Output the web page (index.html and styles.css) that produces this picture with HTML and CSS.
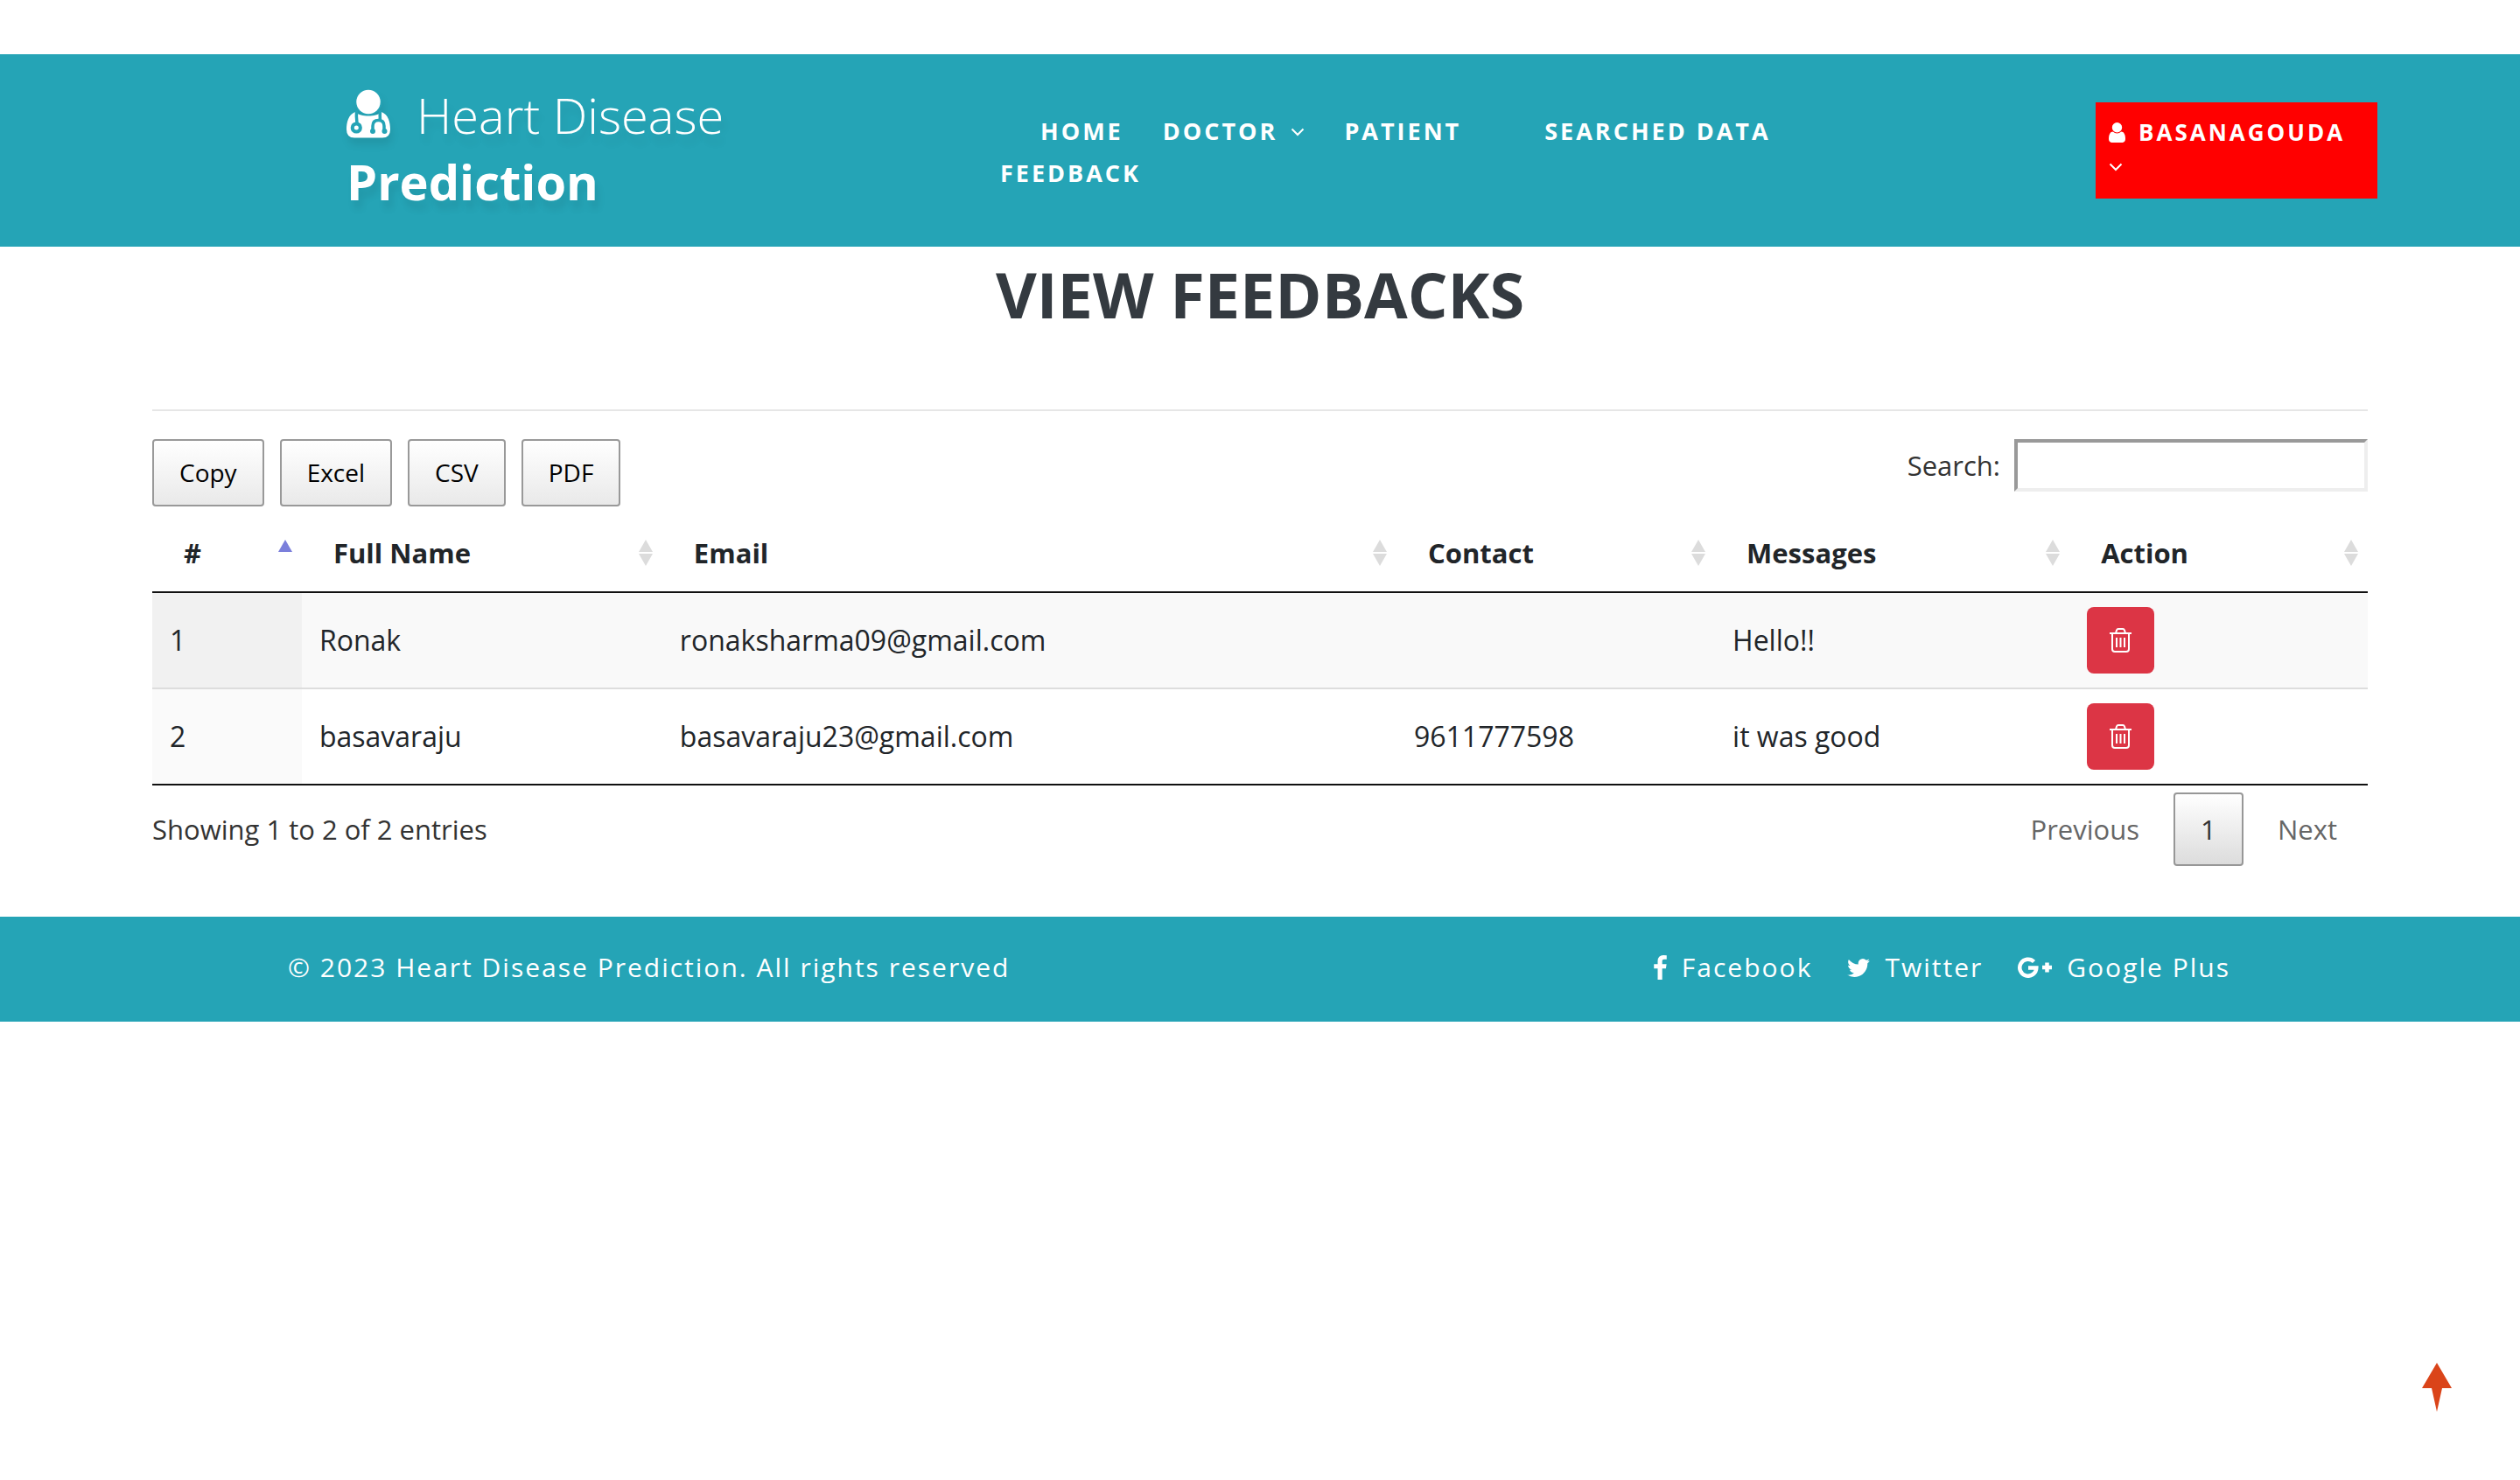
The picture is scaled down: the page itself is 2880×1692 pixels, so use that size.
FILE: index.html
```html
<!DOCTYPE html>
<html lang="en">
<head>
<meta charset="utf-8">
<meta name="viewport" content="width=device-width, initial-scale=1">
<title>Heart Disease Prediction</title>
<link rel="stylesheet" href="styles.css">
</head>
<body>
<svg class="defs" aria-hidden="true">
  <symbol id="chevron" viewBox="0 0 16 10"><path d="M1.500 1.500 8 8l6.500-6.500" fill="none" stroke="currentColor" stroke-width="2"/></symbol>
  <symbol id="trash" viewBox="0 0 25 28"><path d="M0 6h25M7 6l1-3.500Q8.500 1 10 1h5q1.500 0 2 1.500L18 6M3 6v18q0 3 3 3h13q3 0 3-3V6M8 11v11M12.500 11v11M17 11v11" fill="none" stroke="currentColor" stroke-width="2"/></symbol>
  <symbol id="sort" viewBox="0 0 16 30"><path d="M8 0l8 14H0zM0 16h16L8 30z" fill="currentColor"/></symbol>
  <symbol id="sort-up" viewBox="0 0 16 30"><path d="M8 0l8 14H0z" fill="currentColor"/></symbol>
</svg>

<header class="site-header">
  <a class="logo" href="#">
    <span class="logo-top"><svg class="logo-icon" viewBox="0 0 50 56" aria-hidden="true">
      <path fill="#fff" d="M10 26C2 29 0 38 0 46q0 9.500 9 9.500h32q9 0 9-9.500c0-8-2-17-10-20-4 3.500-9 4.500-15 4.500S14 29.500 10 26z"/>
      <circle cx="25" cy="14.500" r="15.500" fill="#25a4b6"/>
      <circle cx="25" cy="14.500" r="13.700" fill="#fff"/>
      <g fill="none" stroke="#25a4b6" stroke-width="3.500">
        <path d="M11.500 24q-.500 7 .500 15"/>
        <path d="M38.500 24q-.500 6 0 12M30 48v-6q0-6.500 6.500-6.500T43 42v6"/>
      </g>
      <g fill="#25a4b6"><circle cx="11.300" cy="44" r="6.600"/><circle cx="30" cy="48" r="3"/><circle cx="43.500" cy="48" r="3"/></g>
      <circle cx="11.300" cy="44" r="2.500" fill="#fff"/>
    </svg>Heart Disease</span>
    <strong class="logo-bottom">Prediction</strong>
  </a>
  <nav>
    <ul class="menu">
      <li class="menu-first"><a href="#">HOME</a></li>
      <li><a href="#">DOCTOR<svg class="chevron" aria-hidden="true"><use href="#chevron"/></svg></a></li>
      <li class="menu-wide"><a href="#">PATIENT</a></li>
      <li><a href="#">SEARCHED DATA</a></li>
      <li><a href="#">FEEDBACK</a></li>
    </ul>
  </nav>
  <a class="account" href="#">
    <span class="account-name"><svg class="user-icon" viewBox="256 128 1280 1536" aria-hidden="true"><path fill="currentColor" d="M1536 1399q0 109-62.500 187t-150.500 78h-854q-88 0-150.500-78t-62.500-187q0-85 8.500-160.500t31.500-152 58.500-131 94-89 134.500-34.500q131 128 313 128t313-128q76 0 134.500 34.500t94 89 58.500 131 31.500 152 8.500 160.500zm-256-887q0 159-112.500 271.500t-271.500 112.500-271.500-112.500-112.500-271.500 112.500-271.500 271.500-112.500 271.500 112.500 112.500 271.500z"/></svg>BASANAGOUDA</span>
    <svg class="account-chevron" aria-hidden="true"><use href="#chevron"/></svg>
  </a>
</header>

<main>
  <h1>VIEW FEEDBACKS</h1>
  <hr>
  <div class="toolbar">
    <div class="exports">
      <button type="button">Copy</button>
      <button type="button">Excel</button>
      <button type="button">CSV</button>
      <button type="button">PDF</button>
    </div>
    <div class="search">
      <label for="search">Search:</label>
      <input id="search" type="search">
    </div>
  </div>
  <table>
    <colgroup><col class="c-num"><col class="c-name"><col class="c-email"><col class="c-contact"><col class="c-msg"><col></colgroup>
    <thead>
      <tr>
        <th scope="col" aria-sort="ascending"><div class="head">#<svg class="sort sorted" aria-hidden="true"><use href="#sort-up"/></svg></div></th>
        <th scope="col"><div class="head">Full Name<svg class="sort" aria-hidden="true"><use href="#sort"/></svg></div></th>
        <th scope="col"><div class="head">Email<svg class="sort" aria-hidden="true"><use href="#sort"/></svg></div></th>
        <th scope="col"><div class="head">Contact<svg class="sort" aria-hidden="true"><use href="#sort"/></svg></div></th>
        <th scope="col"><div class="head">Messages<svg class="sort" aria-hidden="true"><use href="#sort"/></svg></div></th>
        <th scope="col"><div class="head">Action<svg class="sort" aria-hidden="true"><use href="#sort"/></svg></div></th>
      </tr>
    </thead>
    <tbody>
      <tr>
        <td>1</td><td>Ronak</td><td>ronaksharma09@gmail.com</td><td></td><td>Hello!!</td>
        <td><button class="delete" type="button" aria-label="Delete"><svg aria-hidden="true"><use href="#trash"/></svg></button></td>
      </tr>
      <tr>
        <td>2</td><td>basavaraju</td><td>basavaraju23@gmail.com</td><td>9611777598</td><td>it was good</td>
        <td><button class="delete" type="button" aria-label="Delete"><svg aria-hidden="true"><use href="#trash"/></svg></button></td>
      </tr>
    </tbody>
  </table>
  <div class="table-foot">
    <p>Showing 1 to 2 of 2 entries</p>
    <div class="pages">
      <button type="button">Previous</button>
      <button type="button" class="current">1</button>
      <button type="button">Next</button>
    </div>
  </div>
</main>

<footer>
  <p>© 2023 Heart Disease Prediction. All rights reserved</p>
  <ul class="social">
    <li><a href="#"><svg class="i-fb" viewBox="479 0 864 1664" aria-hidden="true"><path fill="currentColor" d="M1343 12v264h-157q-86 0-116 36t-30 108v189h293l-39 296h-254v759h-306v-759h-255v-296h255v-218q0-186 104-288.500t277-102.500q147 0 228 12z"/></svg>Facebook</a></li>
    <li><a href="#"><svg class="i-tw" viewBox="108 256 1576 1280" aria-hidden="true"><path fill="currentColor" d="M1684 408q-67 98-162 167 1 14 1 42 0 130-38 259.500t-115.500 248.500-184.500 210.500-258 146-323 54.500q-271 0-496-145 35 4 78 4 225 0 401-138-105-2-188-64.500t-114-159.500q33 5 61 5 43 0 85-11-112-23-185.500-111.500t-73.500-205.500v-4q68 38 146 41-66-44-105-115t-39-154q0-88 44-163 121 149 294.500 238.500t371.500 99.500q-8-38-8-74 0-134 94.500-228.500t228.500-94.500q140 0 236 102 109-21 205-78-37 115-142 178 93-10 186-50z"/></svg>Twitter</a></li>
    <li><a href="#"><svg class="i-gp" viewBox="0 0 39 24" aria-hidden="true"><path fill="none" stroke="currentColor" stroke-width="4.500" d="M18.500 5.500A9.500 9.500 0 1 0 21.300 12.500H12M28 12h11M33.500 6.500v11"/></svg>Google Plus</a></li>
  </ul>
</footer>

<a class="to-top" href="#" aria-label="Back to top"><svg viewBox="0 0 34 56" aria-hidden="true"><path fill="#da4419" d="M17 0l17 29H23l-6 27-6-27H0z"/></svg></a>
</body>
</html>
```
FILE: styles.css
```css
* { box-sizing: border-box; }

body {
  margin: 0;
  padding-top: 62px;
  background: #fff;
  color: #212529;
  font: 31px/48px "Open Sans", sans-serif;
}

a { color: inherit; text-decoration: none; }
ul { margin: 0; padding: 0; list-style: none; }
p { margin: 0; }
button, input { font: inherit; color: inherit; }
.defs { display: none; }

.site-header {
  display: grid;
  grid-template-columns: 747fr 1000fr 574fr;
  align-items: start;
  padding: 31px 163px 37px 396px;
  background: #25a4b6;
  color: #fff;
}

.logo {
  font-size: 56px;
  line-height: 76px;
  text-shadow: 4px 10px 8px rgba(0, 0, 0, 0.08);
}
.logo-top, .logo-bottom { display: block; }
.logo-top { font-weight: 300; }
.logo-bottom { font-weight: 700; }
.logo-icon {
  width: 50px;
  height: 56px;
  margin-right: 30px;
  vertical-align: -5px;
  filter: drop-shadow(2px 8px 4px rgba(0, 0, 0, 0.08));
}

.menu {
  display: flex;
  flex-wrap: wrap;
  column-gap: 45px;
  padding-top: 33px;
  font-size: 27px;
  font-weight: 700;
  letter-spacing: 3px;
}
.menu-first { margin-left: 46px; }
.menu-wide { margin-right: 50px; }
.chevron { width: 16px; height: 10px; margin-left: 15px; vertical-align: 4px; }

.account {
  justify-self: end;
  width: 322px;
  height: 110px;
  margin-top: 24px;
  padding: 14px 15px;
  background: #f00;
  font-size: 26px;
  font-weight: 700;
  line-height: 40px;
  letter-spacing: 3px;
}
.account-name { display: flex; align-items: center; gap: 15px; }
.user-icon { width: 19px; height: 23px; }
.account-chevron { display: block; width: 16px; height: 10px; margin-top: 15px; }

main { padding: 11px 174px 58px; }

h1 {
  margin: 0 0 89px;
  color: #343a40;
  font-size: 72px;
  line-height: 86px;
  text-align: center;
}

hr { height: 2px; margin: 0; border: 0; background: #e6e6e6; }

.toolbar {
  display: flex;
  justify-content: space-between;
  align-items: flex-start;
  padding: 32px 0 9px;
}
.exports { display: flex; gap: 18px; }
.exports button {
  height: 77px;
  padding: 0 29px 2px;
  border: 2px solid #999;
  border-radius: 4px;
  background: linear-gradient(#fff, #e9e9e9);
  color: #000;
  font-size: 28px;
}
.search { display: flex; align-items: center; gap: 16px; color: #333; }
.search input {
  width: 404px;
  height: 60px;
  padding: 2px 4px;
  border: 4px solid;
  border-color: #999 #eee #eee #999;
  background: #fff;
}

table {
  width: 100%;
  table-layout: fixed;
  border-collapse: separate;
  border-spacing: 0;
  border-bottom: 2px solid #111;
}
.c-num { width: 6.75%; }
.c-name { width: 16.27%; }
.c-email { width: 33.14%; }
.c-contact { width: 14.38%; }
.c-msg { width: 16%; }

th {
  padding: 20px 11px 20px 36px;
  border-bottom: 2px solid #111;
  text-align: left;
}
.head { display: flex; align-items: center; justify-content: space-between; }
.sort { width: 16px; height: 30px; color: #dcdcdc; }
.sorted { color: #7b7fdb; }

td { height: 108px; padding: 16px 20px; font-size: 32px; }
tbody tr:nth-child(odd) td { background: #f9f9f9; }
tbody tr:nth-child(odd) td:first-child { background: #f1f1f1; }
tbody tr:nth-child(even) td:first-child { background: #fafafa; }
tbody tr + tr td { height: 110px; border-top: 2px solid #ddd; }

.delete {
  display: flex;
  align-items: center;
  justify-content: center;
  width: 77px;
  height: 76px;
  padding: 0;
  border: 0;
  border-radius: 8px;
  background: #dc3545;
  color: #fff;
}
.delete svg { width: 25px; height: 28px; }

.table-foot {
  display: flex;
  justify-content: space-between;
  align-items: center;
  padding-top: 8px;
  color: #333;
}
.pages { display: flex; gap: 4px; }
.pages button {
  height: 84px;
  padding: 0 33px;
  border: 2px solid transparent;
  border-radius: 4px;
  background: none;
  color: #666;
}
.pages .current {
  width: 80px;
  padding: 0;
  border-color: #979797;
  background: linear-gradient(#fff, #dcdcdc);
  color: #333;
}

footer {
  display: flex;
  justify-content: space-between;
  align-items: center;
  padding: 34px 331px 38px 329px;
  background: #25a4b6;
  color: #fff;
  font-size: 30px;
  letter-spacing: 2px;
}
footer p { font-weight: 500; }
.social { display: flex; gap: 40px; }
.social a { display: flex; align-items: center; gap: 17px; }
.i-fb { width: 15px; height: 28px; }
.i-tw { width: 26px; height: 21px; }
.i-gp { width: 39px; height: 24px; }

.to-top { position: fixed; right: 78px; bottom: 78px; }
.to-top svg { display: block; width: 34px; height: 56px; }
```
